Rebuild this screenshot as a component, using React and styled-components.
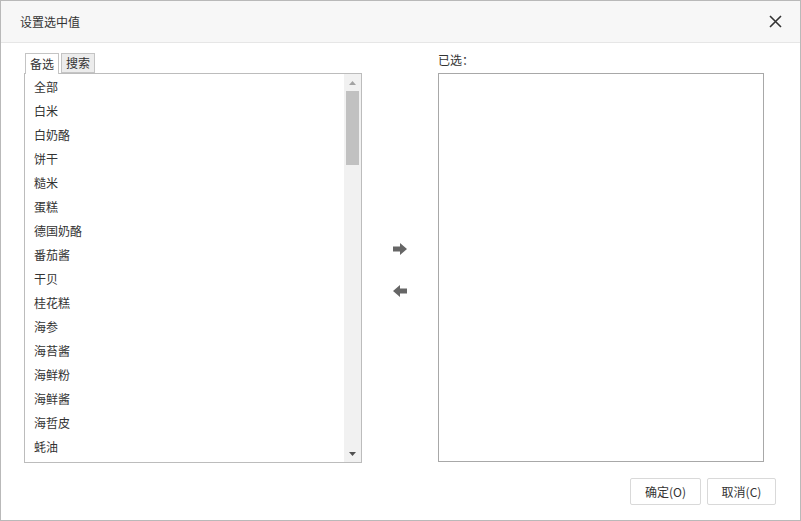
import React from 'react';
import styled, { createGlobalStyle } from 'styled-components';

const GlobalStyle = createGlobalStyle`
  html, body {
    margin: 0;
    padding: 0;
    background: #fff;
  }
  body {
    font-family: "Noto Sans CJK SC", "Liberation Sans", sans-serif;
    font-size: 12px;
    color: #333;
  }
`;

const Dialog = styled.div`
  width: 801px;
  height: 521px;
  box-sizing: border-box;
  border: 1px solid #b9b9b9;
  display: flex;
  flex-direction: column;
  background: #fff;
`;

const Header = styled.div`
  height: 42px;
  box-sizing: border-box;
  flex-shrink: 0;
  background: #f7f7f7;
  border-bottom: 1px solid #e6e6e6;
  display: flex;
  align-items: center;
  justify-content: space-between;
  padding: 0 18px 0 19px;
`;

const Title = styled.div`
  font-size: 12px;
  color: #333;
`;

const CloseButton = styled.div`
  width: 14px;
  height: 14px;
  display: flex;
  align-items: center;
  justify-content: center;
  color: #333;
`;

const Body = styled.div`
  height: 420px;
  flex-shrink: 0;
  display: flex;
  padding: 10px 0 0 23px;
  box-sizing: border-box;
`;

const Column = styled.div`
  width: ${props => props.width}px;
  display: flex;
  flex-direction: column;
`;

const TabRow = styled.div`
  height: 20px;
  display: flex;
  align-items: flex-end;
  gap: 2px;
  padding-left: 1px;
`;

const Tab = styled.div`
  height: ${props => (props.active ? 21 : 20)}px;
  width: 34px;
  box-sizing: border-box;
  border: 1px solid #c4c4c4;
  border-bottom: ${props => (props.active ? 'none' : '1px solid #c4c4c4')};
  background: ${props => (props.active ? '#fff' : '#ececec')};
  display: flex;
  align-items: center;
  justify-content: center;
  padding-bottom: ${props => (props.active ? 2 : 1)}px;
  font-size: 12px;
  color: #333;
  position: relative;
  z-index: 1;
  margin-bottom: ${props => (props.active ? -1 : 0)}px;
`;

const ListBox = styled.div`
  height: 390px;
  box-sizing: border-box;
  border: 1px solid #bcbcbc;
  display: flex;
  overflow: hidden;
`;

const Items = styled.div`
  flex: 1;
  display: flex;
  flex-direction: column;
  padding-top: 1px;
`;

const Item = styled.div`
  height: 24px;
  line-height: 24px;
  padding-left: 9px;
  font-size: 12px;
  color: #333;
`;

const ScrollBar = styled.div`
  width: 17px;
  background: #f1f1f1;
  display: flex;
  flex-direction: column;
  align-items: center;
`;

const ScrollArrow = styled.div`
  height: 17px;
  width: 17px;
  display: flex;
  align-items: center;
  justify-content: center;
`;

const Thumb = styled.div`
  width: 13px;
  height: 74px;
  background: #c1c1c1;
`;

const Spacer = styled.div`
  flex: 1;
`;

const Middle = styled.div`
  width: 76px;
  display: flex;
  flex-direction: column;
  align-items: center;
  padding-top: 189px;
  gap: 29px;
`;

const MoveButton = styled.div`
  width: 16px;
  height: 13px;
  display: flex;
  align-items: center;
  justify-content: center;
  padding-right: 1px;
`;

const Label = styled.div`
  height: 20px;
  line-height: 12px;
  padding-top: 1px;
  box-sizing: border-box;
  font-size: 12px;
  color: #333;
`;

const SelectedBox = styled.div`
  height: 389px;
  box-sizing: border-box;
  border: 1px solid #a8a8a8;
`;

const Footer = styled.div`
  flex: 1;
  display: flex;
  justify-content: flex-end;
  align-items: flex-start;
  gap: 6px;
  padding: 15px 24px 0 0;
`;

const Button = styled.div`
  width: ${props => props.width}px;
  height: 27px;
  box-sizing: border-box;
  border: 1px solid #d9d9d9;
  border-radius: 2px;
  background: #fff;
  display: flex;
  align-items: center;
  justify-content: center;
  font-size: 12px;
  color: #333;
`;

const items = [
  '全部', '白米', '白奶酪', '饼干', '糙米', '蛋糕', '德国奶酪', '番茄酱',
  '干贝', '桂花糕', '海参', '海苔酱', '海鲜粉', '海鲜酱', '海哲皮', '蚝油',
];

const App = () => (
  <>
    <GlobalStyle />
    <Dialog>
      <Header>
        <Title>设置选中值</Title>
        <CloseButton>
          <svg width="13" height="13" viewBox="0 0 13 13">
            <path d="M1 1 L12 12 M12 1 L1 12" stroke="#333" strokeWidth="1.6" />
          </svg>
        </CloseButton>
      </Header>

      <Body>
        <Column width={338}>
          <TabRow>
            <Tab active>备选</Tab>
            <Tab>搜索</Tab>
          </TabRow>
          <ListBox>
            <Items>
              {items.map(name => (
                <Item key={name}>{name}</Item>
              ))}
            </Items>
            <ScrollBar>
              <ScrollArrow>
                <svg width="7" height="4" viewBox="0 0 7 4">
                  <polygon points="3.5,0 7,4 0,4" fill="#a3a3a3" />
                </svg>
              </ScrollArrow>
              <Thumb />
              <Spacer />
              <ScrollArrow>
                <svg width="7" height="4" viewBox="0 0 7 4">
                  <polygon points="0,0 7,0 3.5,4" fill="#505050" />
                </svg>
              </ScrollArrow>
            </ScrollBar>
          </ListBox>
        </Column>

        <Middle>
          <MoveButton>
            <svg width="14" height="12" viewBox="0 0 14 12">
              <polygon points="0,3.5 7,3.5 7,0 14,6 7,12 7,8.5 0,8.5" fill="#666" />
            </svg>
          </MoveButton>
          <MoveButton>
            <svg width="14" height="12" viewBox="0 0 14 12">
              <polygon points="14,3.5 7,3.5 7,0 0,6 7,12 7,8.5 14,8.5" fill="#666" />
            </svg>
          </MoveButton>
        </Middle>

        <Column width={326}>
          <Label>已选：</Label>
          <SelectedBox />
        </Column>
      </Body>

      <Footer>
        <Button width={71}>确定(O)</Button>
        <Button width={69}>取消(C)</Button>
      </Footer>
    </Dialog>
  </>
);

export default App;
